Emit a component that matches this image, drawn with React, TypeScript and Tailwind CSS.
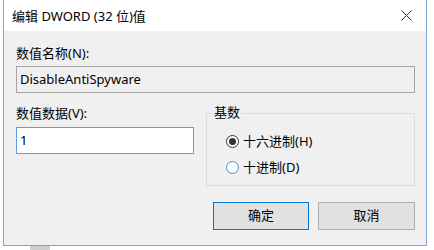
import React from "react";

const font = { fontFamily: '"Noto Sans", "Noto Sans CJK SC", sans-serif' };

const Radio = ({ checked, focused, label }: { checked?: boolean; focused?: boolean; label: string }) => (
  <div className="flex items-center h-[16px]">
    <span
      className={`w-[13px] h-[13px] rounded-full border bg-white flex items-center justify-center ${
        focused ? "border-[#3c8ee0]" : "border-[#333333]"
      }`}
    >
      {checked && <span className="w-[7px] h-[7px] rounded-full bg-[#333333]" />}
    </span>
    <span className="ml-[4px] text-[13px] leading-[16px] text-black">{label}</span>
  </div>
);

export default function App() {
  return (
    <div className="w-[434px] h-[250px] bg-white overflow-hidden" style={font}>
      {/* Dialog window */}
      <div className="ml-[3px] w-[424px] h-[246px] border-x border-b border-[#7fa5d6] bg-[#f0f0f0]">
        {/* Title bar */}
        <div className="h-[31px] bg-white flex items-center justify-between pl-[8px] pr-[12px]">
          <span className="text-[13px] leading-[16px] text-black">编辑 DWORD (32 位)值</span>
          <svg width="11" height="11" viewBox="0 0 11 11" className="mr-[2px]">
            <path d="M0.5 0.5 L10.5 10.5 M10.5 0.5 L0.5 10.5" stroke="#333" strokeWidth="1" fill="none" />
          </svg>
        </div>

        {/* Body */}
        <div className="pl-[12px] pr-[11px]">
          <div className="mt-[14px] text-[13px] leading-[16px] text-black">数值名称(N):</div>
          <div className="mt-[5px] h-[27px] border border-[#a5a5a5] bg-[#f0f0f0] flex items-center pl-[3px] text-[13px] text-black">
            DisableAntiSpyware
          </div>

          <div className="flex">
            {/* Value data */}
            <div className="w-[178px]">
              <div className="mt-[12px] text-[13px] leading-[16px] text-black">数值数据(V):</div>
              <div className="mt-[6px] h-[27px] border border-[#5f9fe0] bg-white flex items-center pl-[3px] text-[13px] text-black">
                1
              </div>
            </div>

            {/* Base group */}
            <div className="ml-[12px] mt-[20px] w-[209px] h-[73px] border border-[#dcdcdc] relative">
              <span className="absolute left-[6px] top-[-10px] px-[1px] bg-[#f0f0f0] text-[13px] leading-[16px] text-black">
                基数
              </span>
              <div className="pl-[19px] pt-[19px] flex flex-col gap-[10px]">
                <Radio checked label="十六进制(H)" />
                <Radio focused label="十进制(D)" />
              </div>
            </div>
          </div>

          {/* Buttons */}
          <div className="mt-[16px] flex justify-end gap-[9px]">
            <button className="w-[96px] h-[28px] border border-[#0078d7] bg-[#e1e1e1] text-[13px] text-black">
              确定
            </button>
            <button className="w-[97px] h-[28px] border border-[#adadad] bg-[#e1e1e1] text-[13px] text-black">
              取消
            </button>
          </div>
        </div>
      </div>
      <div className="ml-[30px] w-[20px] h-[4px] bg-[#cfcfcf]" />
    </div>
  );
}
